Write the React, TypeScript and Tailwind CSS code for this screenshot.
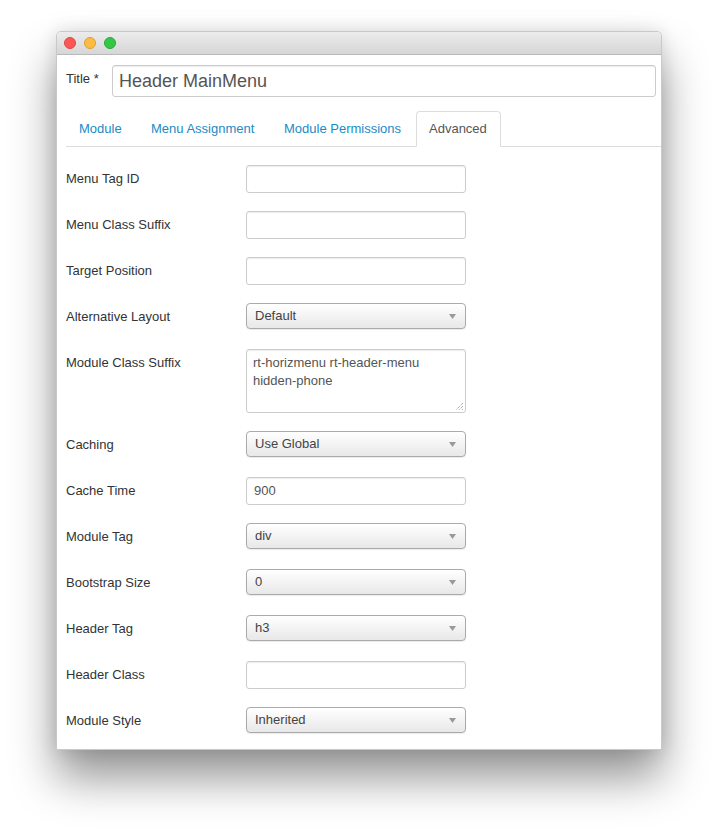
import React from "react";

const font = { fontFamily: '"Liberation Sans", Arial, Helvetica, sans-serif' };

function TextInput({ value = "" }: { value?: string }) {
  return (
    <div className="w-[220px] h-[28px] rounded-[3px] border border-[#cccccc] bg-white shadow-[inset_0_1px_1px_rgba(0,0,0,0.075)] px-[7px] flex items-center text-[13px] text-[#555555]">
      {value}
    </div>
  );
}

function Select({ value }: { value: string }) {
  return (
    <div className="w-[220px] h-[26px] rounded-[4px] border border-[#aaaaaa] bg-gradient-to-b from-white to-[#e8e8e8] shadow-[0_1px_1px_rgba(0,0,0,0.08)] pl-[8px] pr-[9px] flex items-center justify-between text-[13px] text-[#444444]">
      <span className="-mt-[1px]">{value}</span>
      <svg width="7" height="5" viewBox="0 0 7 5">
        <path d="M0 0 L7 0 L3.5 5 Z" fill="#999999" />
      </svg>
    </div>
  );
}

function TextArea() {
  return (
    <div className="relative w-[220px] h-[64px] rounded-[3px] border border-[#cccccc] bg-white shadow-[inset_0_1px_1px_rgba(0,0,0,0.075)] px-[6px] pt-[4px] text-[13px] leading-[18px] text-[#555555]">
      <div>rt-horizmenu rt-header-menu</div>
      <div>hidden-phone</div>
      <svg className="absolute right-[1px] bottom-[1px]" width="9" height="9" viewBox="0 0 9 9">
        <path d="M8 1 L1 8 M8 4 L4 8 M8 7 L7 8" stroke="#888888" strokeWidth="1" strokeDasharray="1 1" />
      </svg>
    </div>
  );
}

type Row =
  | { label: string; kind: "input"; value?: string }
  | { label: string; kind: "select"; value: string }
  | { label: string; kind: "textarea" };

const rows: Row[] = [
  { label: "Menu Tag ID", kind: "input" },
  { label: "Menu Class Suffix", kind: "input" },
  { label: "Target Position", kind: "input" },
  { label: "Alternative Layout", kind: "select", value: "Default" },
  { label: "Module Class Suffix", kind: "textarea" },
  { label: "Caching", kind: "select", value: "Use Global" },
  { label: "Cache Time", kind: "input", value: "900" },
  { label: "Module Tag", kind: "select", value: "div" },
  { label: "Bootstrap Size", kind: "select", value: "0" },
  { label: "Header Tag", kind: "select", value: "h3" },
  { label: "Header Class", kind: "input" },
  { label: "Module Style", kind: "select", value: "Inherited" },
];

export default function App() {
  return (
    <div className="w-[718px] h-[829px] bg-white pt-[31px] pl-[56px]" style={font}>
      <div className="w-[606px] rounded-t-[5px] bg-white border border-[#c9c9c9] shadow-[0_28px_45px_rgba(0,0,0,0.42),0_0_18px_rgba(0,0,0,0.12)]">
        {/* title bar */}
        <div className="h-[23px] rounded-t-[5px] bg-gradient-to-b from-[#ececec] to-[#d6d6d6] border-b border-[#b9b9b9] flex items-center pl-[7px] gap-[8px]">
          <div className="w-[12px] h-[12px] rounded-full bg-[#fc5753] border border-[#df4744]" />
          <div className="w-[12px] h-[12px] rounded-full bg-[#fdbc40] border border-[#de9f34]" />
          <div className="w-[12px] h-[12px] rounded-full bg-[#33c748] border border-[#27aa35]" />
        </div>

        {/* body */}
        <div className="pl-[9px] pr-[5px] pt-[10px] pb-[14px]">
          <div className="flex items-center">
            <div className="w-[46px] text-[13px] text-[#333333] -mt-[4px]">Title *</div>
            <div className="flex-1 h-[32px] rounded-[3px] border border-[#cccccc] shadow-[inset_0_1px_1px_rgba(0,0,0,0.075)] flex items-center px-[6px] text-[18px] text-[#555555]">
              Header MainMenu
            </div>
          </div>

          {/* tabs */}
          <div className="mt-[14px] -mr-[5px] flex border-b border-[#dddddd] text-[13px] leading-[18px]">
            <div className="w-[70px] pl-[13px] pt-[9px] pb-[8px] mr-[2px] text-[#1a8bc6]">Module</div>
            <div className="w-[131px] pl-[13px] pt-[9px] pb-[8px] mr-[2px] text-[#1a8bc6]">Menu Assignment</div>
            <div className="w-[143px] pl-[13px] pt-[9px] pb-[8px] mr-[2px] text-[#1a8bc6] whitespace-nowrap">Module Permissions</div>
            <div className="w-[85px] pl-[12px] pt-[8px] pb-[8px] -mb-[1px] border border-[#dddddd] border-b-white rounded-t-[4px] bg-white text-[#555555]">
              Advanced
            </div>
          </div>

          {/* form */}
          <div className="pt-[18px] flex flex-col gap-[18px]">
            {rows.map((r) => (
              <div key={r.label} className="flex items-start">
                <div className="w-[180px] text-[13px] text-[#333333] pt-[4px]">{r.label}</div>
                {r.kind === "input" && <TextInput value={r.value} />}
                {r.kind === "select" && (
                  <div className="h-[28px]">
                    <Select value={r.value} />
                  </div>
                )}
                {r.kind === "textarea" && <TextArea />}
              </div>
            ))}
          </div>
        </div>
      </div>
    </div>
  );
}
